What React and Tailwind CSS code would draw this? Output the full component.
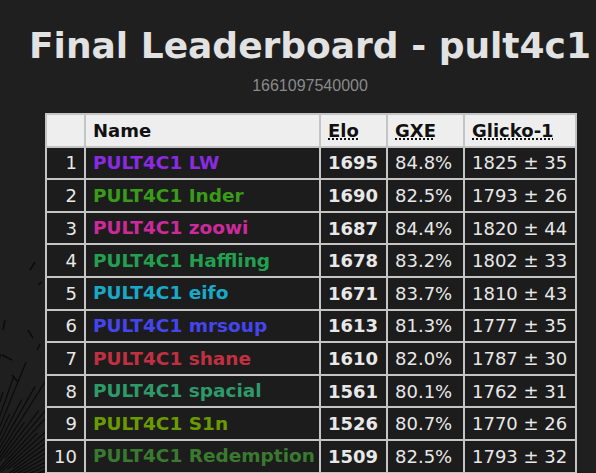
import React from 'react';

const rows = [
  { name: 'PULT4C1 LW', color: '#8a2be2', elo: 1695, gxe: '84.8%', glicko: '1825 ± 35' },
  { name: 'PULT4C1 Inder', color: '#3a9a1a', elo: 1690, gxe: '82.5%', glicko: '1793 ± 26' },
  { name: 'PULT4C1 zoowi', color: '#cc2a9a', elo: 1687, gxe: '84.4%', glicko: '1820 ± 44' },
  { name: 'PULT4C1 Haffling', color: '#22a050', elo: 1678, gxe: '83.2%', glicko: '1802 ± 33' },
  { name: 'PULT4C1 eifo', color: '#1aa8c8', elo: 1671, gxe: '83.7%', glicko: '1810 ± 43' },
  { name: 'PULT4C1 mrsoup', color: '#4545ee', elo: 1613, gxe: '81.3%', glicko: '1777 ± 35' },
  { name: 'PULT4C1 shane', color: '#c03040', elo: 1610, gxe: '82.0%', glicko: '1787 ± 30' },
  { name: 'PULT4C1 spacial', color: '#2e9a6a', elo: 1561, gxe: '80.1%', glicko: '1762 ± 31' },
  { name: 'PULT4C1 S1n', color: '#6a9a00', elo: 1526, gxe: '80.7%', glicko: '1770 ± 26' },
  { name: 'PULT4C1 Redemption', color: '#3a7a30', elo: 1509, gxe: '82.5%', glicko: '1793 ± 32' },
];

// faint ink sketch in the page background
function Sketch() {
  const strokes = [];
  for (let i = 0; i < 30; i++) {
    const a = -1.5 + i * 0.045;
    const r1 = 30 + (i % 5) * 6;
    const r2 = 95 + (i % 4) * 18;
    strokes.push(
      <line key={i} x1={-30 + Math.cos(a) * r1} y1={500 + Math.sin(a) * r1} x2={-30 + Math.cos(a) * r2} y2={500 + Math.sin(a) * r2} stroke="#0b0b0b" strokeWidth="1.2" />
    );
  }
  const ticks = [[35, 262, 30, 270], [5, 320, 3, 330], [28, 330, 33, 338], [40, 344, 37, 350], [2, 355, 12, 360], [12, 375, 18, 382], [38, 285, 42, 282]];
  return (
    <svg className="pointer-events-none absolute left-0 top-0" width="596" height="473">
      {strokes}
      {ticks.map(([a, b, c, d], i) => <line key={'t' + i} x1={a} y1={b} x2={c} y2={d} stroke="#0b0b0b" strokeWidth="1.5" />)}
    </svg>
  );
}

export default function App() {
  const cell = 'border-2 border-[#c4c4c4] h-[32.6px] px-[7px] py-0';
  return (
    <div className="relative h-[473px] w-[596px] overflow-hidden bg-[#1f1f1f] text-[18px] text-[#e8e8e8]" style={{ fontFamily: '"DejaVu Sans", Verdana, sans-serif' }}>
      <Sketch />
      <div className="relative ml-[45px] w-[530px] pt-[26px]">
        <h1 className="-mx-[30px] whitespace-nowrap text-center text-[36px] font-bold leading-[40px] text-[#e2e2e2]">Final Leaderboard - pult4c1</h1>
        <p className="mt-[10px] text-center text-[16px] leading-[20px] text-[#8a8a8a]" style={{ fontFamily: '"Liberation Sans", Arial, sans-serif' }}>1661097540000</p>
        <table className="mt-[17px] w-[530px] table-fixed border-collapse">
          <colgroup>
            <col className="w-[39px]" />
            <col className="w-[235px]" />
            <col className="w-[67px]" />
            <col className="w-[77px]" />
            <col className="w-[112px]" />
          </colgroup>
          <thead>
            <tr className="bg-[#eeeeee] text-left font-bold text-[#111]">
              <th className={cell}></th>
              <th className={cell}>Name</th>
              <th className={cell}><abbr className="underline decoration-dotted underline-offset-2">Elo</abbr></th>
              <th className={cell}><abbr className="underline decoration-dotted underline-offset-2">GXE</abbr></th>
              <th className={cell}><abbr className="underline decoration-dotted underline-offset-2">Glicko-1</abbr></th>
            </tr>
          </thead>
          <tbody>
            {rows.map((r, i) => (
              <tr key={r.name} className="bg-[#1c1c1c] whitespace-nowrap">
                <td className={cell + ' text-right'}>{i + 1}</td>
                <td className={cell + ' text-[18.5px] font-bold'} style={{ color: r.color }}>{r.name}</td>
                <td className={cell + ' font-bold'}>{r.elo}</td>
                <td className={cell}>{r.gxe}</td>
                <td className={cell}>{r.glicko}</td>
              </tr>
            ))}
          </tbody>
        </table>
      </div>
    </div>
  );
}
